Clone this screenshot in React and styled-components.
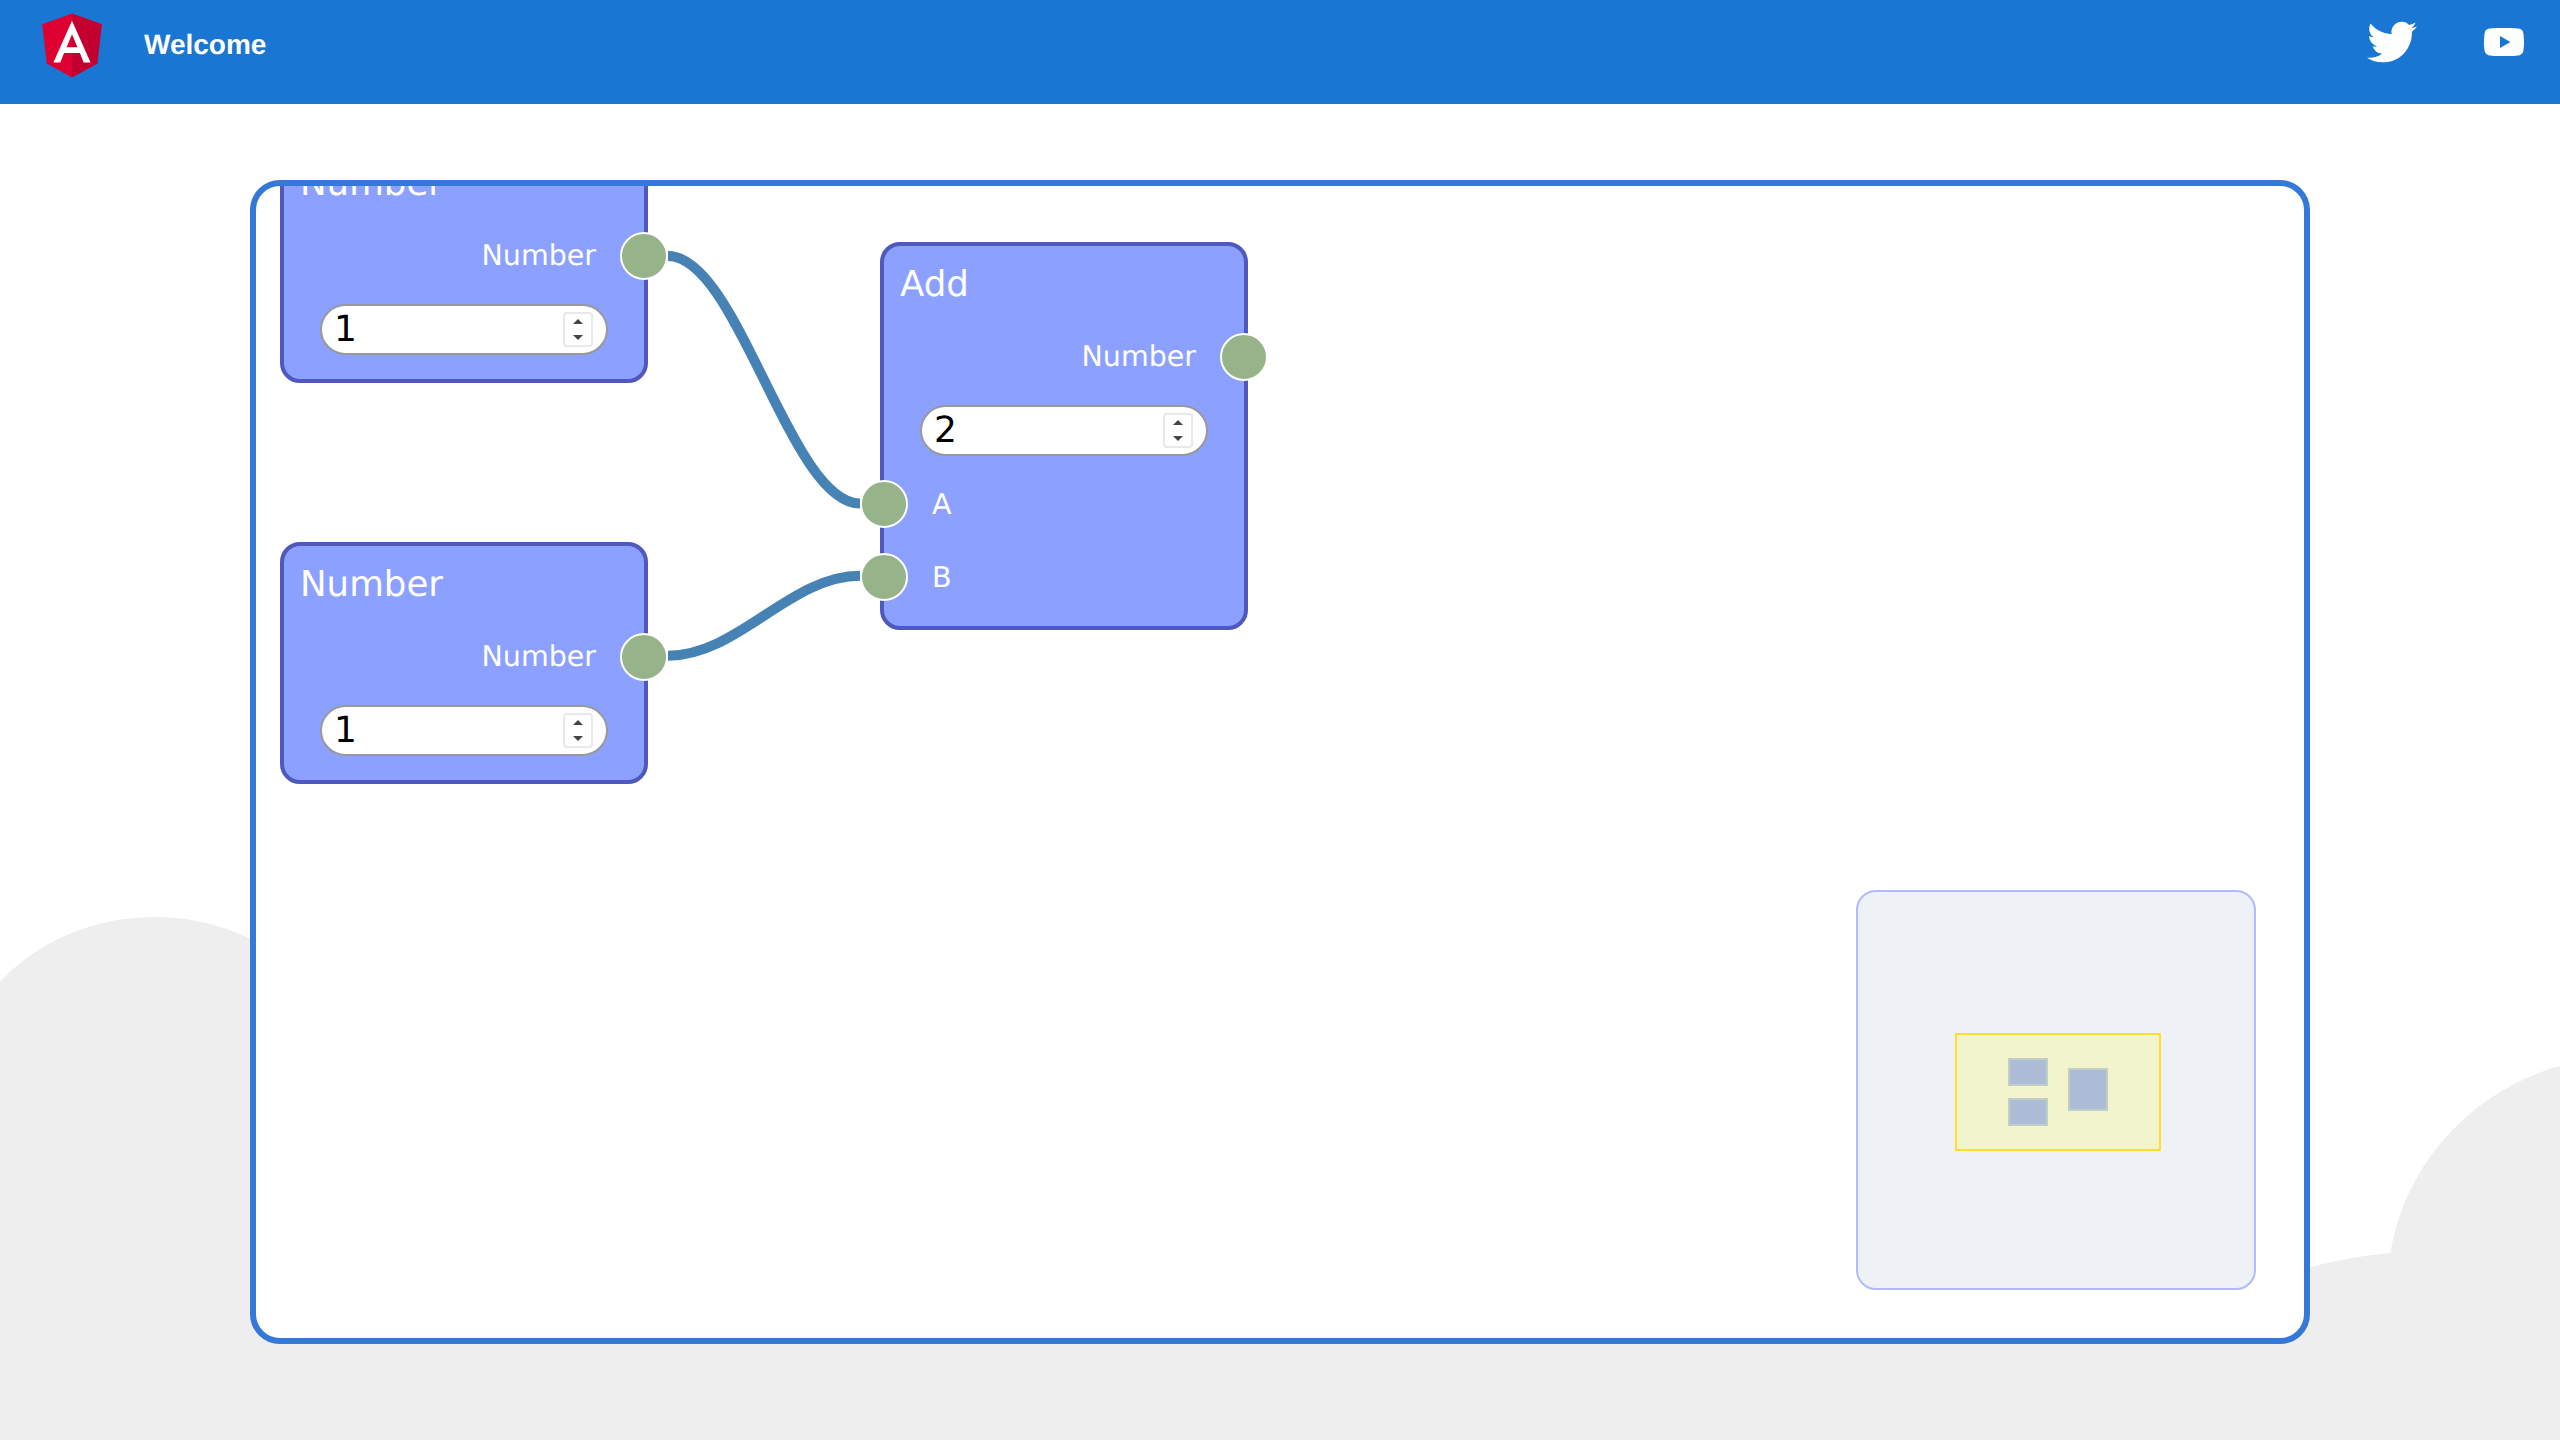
import styled, { createGlobalStyle } from "styled-components";

const GlobalStyle = createGlobalStyle`
  html {
    height: 100%;
    overflow: hidden;
    background-color: white;
  }
  body {
    margin: 0;
    height: 100%;
    font-family: "DejaVu Sans", sans-serif;
    text-rendering: geometricPrecision;
  }
`;

const Clouds = styled.svg`
  position: fixed;
  left: -460px;
  top: 917px;
  width: 3840px;
  height: 714px;
  z-index: -1;
`;
const Header = styled.header`
  display: flex;
  align-items: center;
  box-sizing: border-box;
  height: 104px;
  padding: 0 32px 20px;
  background-color: #1976d2;
`;
const Logo = styled.svg`
  width: 80px;
  height: 80px;
  margin-top: 3px;
`;
const Welcome = styled.span`
  margin: 6px 0 0 32px;
  color: white;
  font-family: "Liberation Sans", sans-serif;
  font-size: 28px;
  font-weight: 700;
`;
const Spacer = styled.div`
  flex: 1;
`;
const Links = styled.nav`
  display: flex;
  align-items: center;
  gap: 48px;
`;
const Twitter = styled.svg`
  width: 80px;
  height: 80px;
  fill: white;
`;
const Youtube = styled.svg`
  width: 48px;
  height: 48px;
  fill: white;
`;
const Editor = styled.main`
  position: relative;
  box-sizing: border-box;
  width: 2060px;
  height: 1164px;
  margin: 76px auto 0;
  overflow: hidden;
  background-color: white;
  border: 6px solid #3478da;
  border-radius: 30px;
`;
const Wires = styled.svg`
  position: absolute;
  inset: 0;
  width: 100%;
  height: 100%;
  fill: none;
  stroke: steelblue;
  stroke-width: 10px;
`;
const Node = styled.section`
  position: absolute;
  left: ${(props) => props.$x}px;
  top: ${(props) => props.$y}px;
  box-sizing: border-box;
  width: 368px;
  padding-bottom: 12px;
  background-color: #8ca0ff;
  border: 4px solid #4e58bf;
  border-radius: 20px;
  color: white;
`;
const Title = styled.div`
  display: flex;
  align-items: center;
  box-sizing: border-box;
  height: 74px;
  padding: 2px 0 0 16px;
  font-size: 35.6px;
`;
const Row = styled.div`
  display: flex;
  align-items: center;
  justify-content: ${(props) => (props.$output ? "flex-end" : "flex-start")};
  gap: 24px;
  height: 73px;
  font-size: 28.5px;
`;
const Socket = styled.span`
  box-sizing: border-box;
  width: 48px;
  height: 48px;
  margin: ${(props) => (props.$output ? "0 -24px 0 0" : "0 0 0 -24px")};
  background-color: #96b38a;
  border: 2px solid white;
  border-radius: 50%;
`;
const Control = styled.div`
  display: flex;
  align-items: center;
  box-sizing: border-box;
  height: 50.5px;
  margin: 12px 36.5px 12px 36px;
  padding: 0 12.5px 0 12px;
  background-color: white;
  border: 2px solid #999;
  border-radius: 30px;
`;
const ValueInput = styled.input`
  flex: 1;
  min-width: 0;
  padding: 0;
  border: 0;
  outline: 0;
  background: transparent;
  color: black;
  font-family: "DejaVu Sans", sans-serif;
  font-size: 36px;
  text-rendering: geometricPrecision;
`;
const Spinner = styled.div`
  display: flex;
  flex-direction: column;
  align-items: center;
  justify-content: center;
  gap: 11px;
  box-sizing: border-box;
  width: 30px;
  height: 35px;
  border: 2px solid #e9e9e9;
  border-radius: 4px;
`;
const Arrow = styled.i`
  width: 0;
  height: 0;
  border-left: 5px solid transparent;
  border-right: 5px solid transparent;
  ${(props) => (props.$down ? "border-top: 5px solid #444;" : "border-bottom: 5px solid #444;")}
`;
const Minimap = styled.aside`
  position: absolute;
  right: 48px;
  bottom: 48px;
  box-sizing: border-box;
  width: 400px;
  height: 400px;
  background-color: #eef1f6;
  border: 2px solid #b3b9ff;
  border-radius: 20px;
`;
const MiniBox = styled.div`
  position: absolute;
  left: ${(props) => props.$x}px;
  top: ${(props) => props.$y}px;
  box-sizing: border-box;
  width: ${(props) => props.$w}px;
  height: ${(props) => props.$h}px;
`;
const MiniViewport = styled(MiniBox)`
  background-color: #f2f4ce;
  border: 2px solid #ffdf2a;
`;
const MiniNode = styled(MiniBox)`
  background-color: #adbcd6;
  border: 2px solid #c0cfc6;
`;

const miniNodes = [
  { x: 150, y: 166, h: 28 },
  { x: 150, y: 206, h: 28 },
  { x: 210, y: 176, h: 43 },
];

function NumberControl({ value }) {
  return (
    <Control>
      <ValueInput readOnly value={value} />
      <Spinner>
        <Arrow />
        <Arrow $down />
      </Spinner>
    </Control>
  );
}

function NumberNode({ x, y }) {
  return (
    <Node $x={x} $y={y}>
      <Title>Number</Title>
      <Row $output>
        Number
        <Socket $output />
      </Row>
      <NumberControl value="1" />
    </Node>
  );
}

function App() {
  return (
    <>
      <GlobalStyle />
      <Clouds viewBox="0 0 2611.084 485.677">
        <path
          d="M2379.709,863.793c10-93-77-171-168-149-52-114-225-105-264,15-75,3-140,59-152,133-30,2.83-66.725,9.829-93.5,26.25-26.771-16.421-63.5-23.42-93.5-26.25-12-74-77-130-152-133-39-120-212-129-264-15-54.084-13.075-106.753,9.173-138.488,48.9-31.734-39.726-84.4-61.974-138.487-48.9-52-114-225-105-264,15a162.027,162.027,0,0,0-103.147,43.044c-30.633-45.365-87.1-72.091-145.206-58.044-52-114-225-105-264,15-75,3-140,59-152,133-53,5-127,23-130,83-2,42,35,72,70,86,49,20,106,18,157,5a165.625,165.625,0,0,0,120,0c47,94,178,113,251,33,61.112,8.015,113.854-5.72,150.492-29.764a165.62,165.62,0,0,0,110.861-3.236c47,94,178,113,251,33,31.385,4.116,60.563,2.495,86.487-3.311,25.924,5.806,55.1,7.427,86.488,3.311,73,80,204,61,251-33a165.625,165.625,0,0,0,120,0c51,13,108,15,157-5a147.188,147.188,0,0,0,33.5-18.694,147.217,147.217,0,0,0,33.5,18.694c49,20,106,18,157,5a165.625,165.625,0,0,0,120,0c47,94,178,113,251,33C2446.709,1093.793,2554.709,922.793,2379.709,863.793Z"
          transform="translate(142.69 -634.312)"
          fill="#eee"
        />
      </Clouds>
      <Header>
        <Logo viewBox="0 0 250 250">
          <polygon fill="#DD0031" points="125,30 31.9,63.2 46.1,186.3 125,230 203.9,186.3 218.1,63.2" />
          <polygon fill="#C3002F" points="125,30 125,230 203.9,186.3 218.1,63.2" />
          <path
            fill="#fff"
            d="M125,52.1L66.8,182.6h21.7l11.7-29.2h49.4l11.7,29.2h21.7L125,52.1z M142,135.4H108l17-40.9L142,135.4z"
          />
        </Logo>
        <Welcome>Welcome</Welcome>
        <Spacer />
        <Links>
          <Twitter viewBox="0 0 400 400">
            <path d="M153.62,301.59c94.34,0,145.94-78.16,145.94-145.94,0-2.22,0-4.43-.15-6.63A104.36,104.36,0,0,0,325,122.47a102.38,102.38,0,0,1-29.46,8.07,51.47,51.47,0,0,0,22.55-28.37,102.79,102.79,0,0,1-32.57,12.45,51.34,51.34,0,0,0-87.41,46.78A145.62,145.62,0,0,1,92.4,107.81a51.33,51.33,0,0,0,15.88,68.47A50.91,50.91,0,0,1,85,169.86c0,.21,0,.43,0,.65a51.31,51.31,0,0,0,41.15,50.28,51.21,51.21,0,0,1-23.16.88,51.35,51.35,0,0,0,47.92,35.62,102.92,102.92,0,0,1-63.7,22A104.41,104.41,0,0,1,75,278.55a145.21,145.21,0,0,0,78.62,23" />
          </Twitter>
          <Youtube viewBox="0 0 24 24">
            <path d="M21.58 7.19c-.23-.86-.91-1.54-1.77-1.77C18.25 5 12 5 12 5s-6.25 0-7.81.42c-.86.23-1.54.91-1.77 1.77C2 8.75 2 12 2 12s0 3.25.42 4.81c.23.86.91 1.54 1.77 1.77C5.75 19 12 19 12 19s6.25 0 7.81-.42c.86-.23 1.54-.91 1.77-1.77C22 15.25 22 12 22 12s0-3.25-.42-4.81zM10 15V9l5.2 3-5.2 3z" />
          </Youtube>
        </Links>
      </Header>
      <Editor>
        <Wires>
          <path d="M412 70C482 70 534 317.5 604 317.5" />
          <path d="M412 469.7C482 469.7 534 389.7 604 389.7" />
        </Wires>
        <NumberNode x={24} y={-45} />
        <NumberNode x={24} y={356} />
        <Node $x={624} $y={56}>
          <Title>Add</Title>
          <Row $output>
            Number
            <Socket $output />
          </Row>
          <NumberControl value="2" />
          <Row>
            <Socket />A
          </Row>
          <Row>
            <Socket />B
          </Row>
        </Node>
        <Minimap>
          <MiniViewport $x={97} $y={141} $w={206} $h={118} />
          {miniNodes.map((node) => (
            <MiniNode key={node.y} $x={node.x} $y={node.y} $w={40} $h={node.h} />
          ))}
        </Minimap>
      </Editor>
    </>
  );
}

export default App;
